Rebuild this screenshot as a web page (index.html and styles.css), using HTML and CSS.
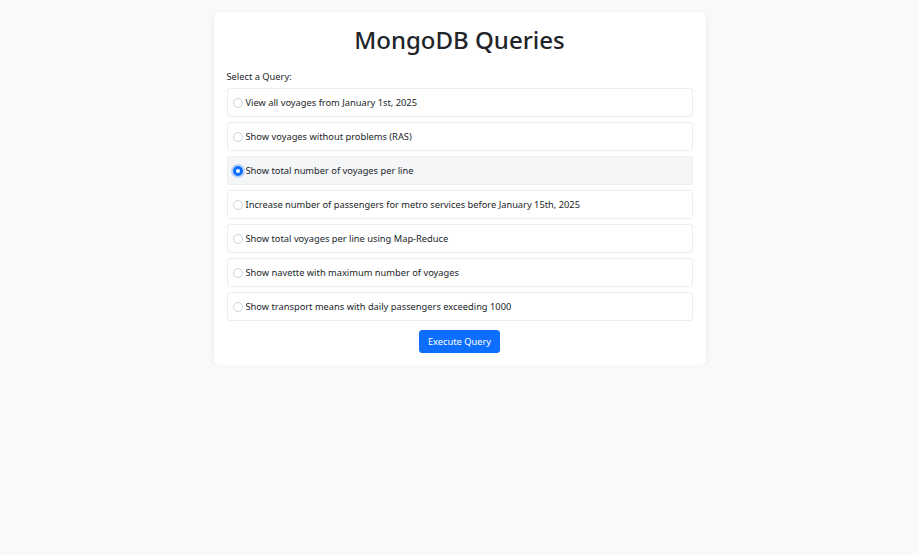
FILE: index.html
```html
<!DOCTYPE html>
<html lang="en">
<head>
<meta charset="utf-8">
<title>MongoDB Queries</title>
<link rel="stylesheet" href="styles.css">
</head>
<body>
<div class="card">
  <h1 class="title">MongoDB Queries</h1>
  <div class="label">Select a Query:</div>
  <div class="options">
    <label class="option"><input type="radio" name="q"><span>View all voyages from January 1st, 2025</span></label>
    <label class="option"><input type="radio" name="q"><span>Show voyages without problems (RAS)</span></label>
    <label class="option active"><input type="radio" name="q" checked><span>Show total number of voyages per line</span></label>
    <label class="option"><input type="radio" name="q"><span>Increase number of passengers for metro services before January 15th, 2025</span></label>
    <label class="option"><input type="radio" name="q"><span>Show total voyages per line using Map-Reduce</span></label>
    <label class="option"><input type="radio" name="q"><span>Show navette with maximum number of voyages</span></label>
    <label class="option"><input type="radio" name="q"><span>Show transport means with daily passengers exceeding 1000</span></label>
  </div>
  <div class="actions">
    <button class="btn">Execute Query</button>
  </div>
</div>
</body>
</html>
```

FILE: styles.css
```css
html, body {
  margin: 0;
  padding: 0;
  background: #f8f9fa;
  font-family: "Noto Sans", "Open Sans", sans-serif;
  color: #212529;
}
body {
  padding-top: 12px;
}
.card {
  width: 466px;
  margin: 0 auto;
  background: #fff;
  border-radius: 5px;
  box-shadow: 0 1px 4px rgba(0,0,0,0.08);
  padding: 12px 13px 12px;
}
.title {
  margin: 0;
  text-align: center;
  font-size: 24px;
  font-weight: 500;
  line-height: 32px;
  height: 36px;
}
.label {
  margin-top: 10px;
  font-size: 9.3px;
  line-height: 14px;
}
.options {
  margin-top: 4px;
  display: flex;
  flex-direction: column;
  gap: 5px;
}
.option {
  display: flex;
  align-items: center;
  height: 27px;
  padding: 0 5px;
  border: 1px solid #eceef0;
  border-radius: 3px;
  font-size: 9.3px;
  cursor: pointer;
}
.option.active {
  background: #f5f6f8;
}
.option input {
  appearance: none;
  -webkit-appearance: none;
  width: 10px;
  height: 10px;
  margin: 0 3px 0 0;
  border: 1px solid #d0d4d8;
  border-radius: 50%;
  background: #fff;
  flex: none;
}
.option input:checked {
  border: 3px solid #0d6efd;
  background: #fff;
  box-shadow: 0 0 0 2px rgba(13,110,253,0.25);
}
.actions {
  display: flex;
  justify-content: center;
  margin-top: 9px;
}
.btn {
  font-family: inherit;
  font-size: 9.3px;
  color: #fff;
  background: #0d6efd;
  border: 1px solid #0d6efd;
  border-radius: 3px;
  height: 23px;
  padding: 0 8px;
  cursor: pointer;
}
```
